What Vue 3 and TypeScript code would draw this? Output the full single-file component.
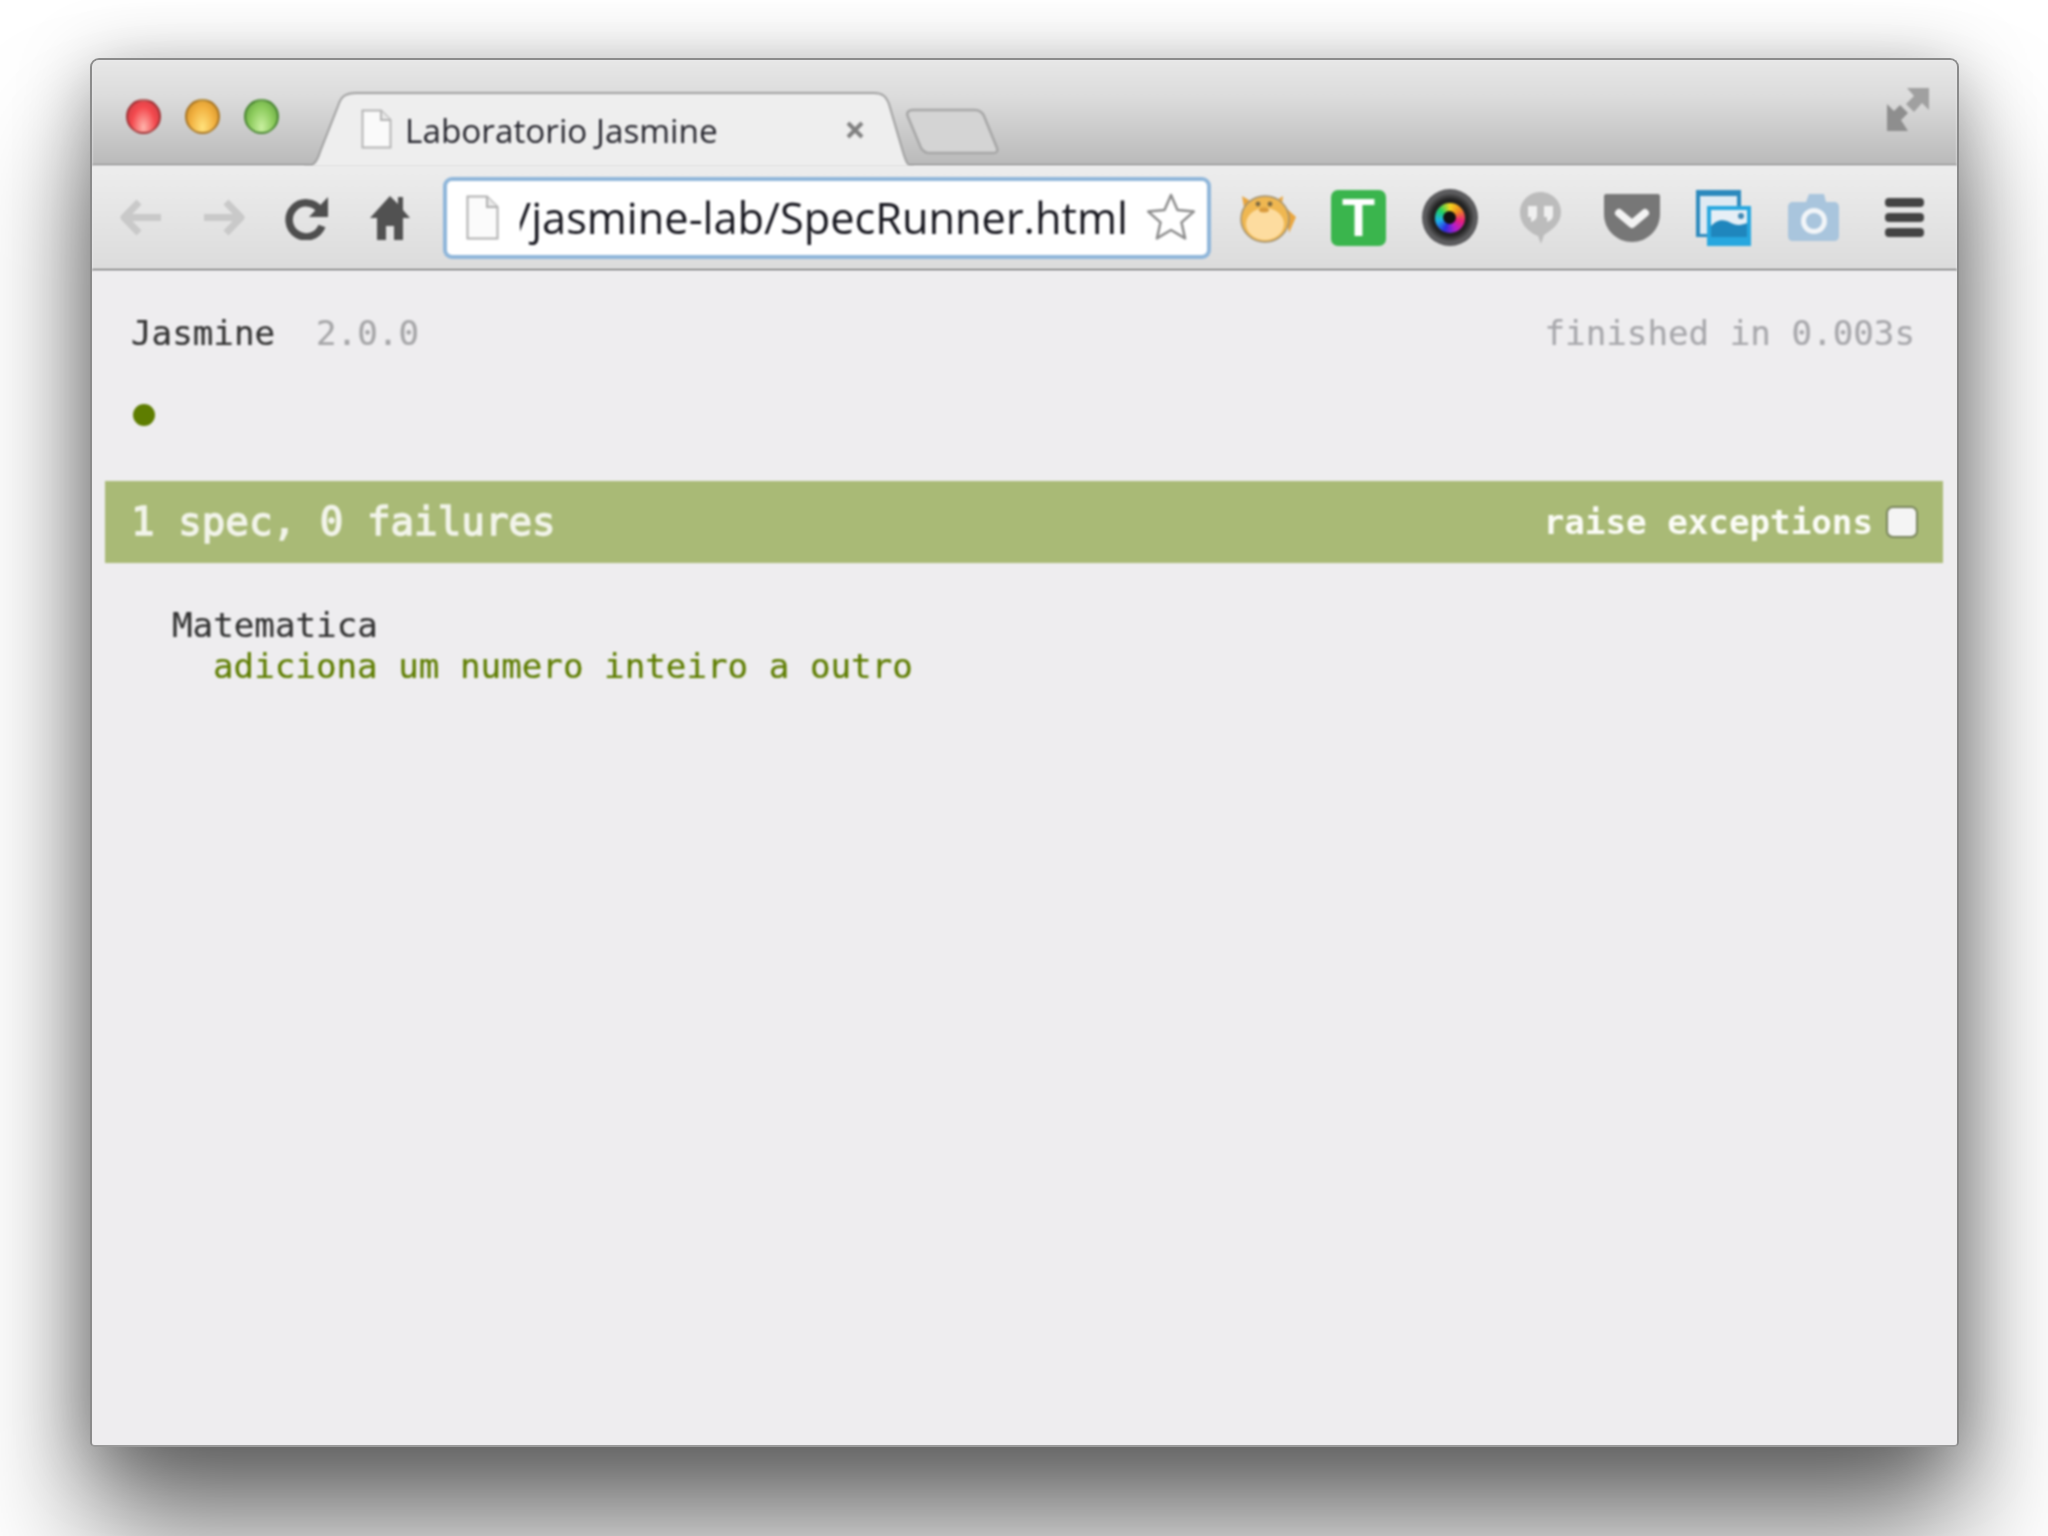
<script setup lang="ts">
const title: string = 'Laboratorio Jasmine'
const url: string = '/jasmine-lab/SpecRunner.html'
</script>

<template>
  <div class="page">
    <div class="window">
      <div class="titlebar">
        <div class="lights">
          <span class="light red"></span>
          <span class="light amber"></span>
          <span class="light green"></span>
        </div>
        <div class="tab">
          <svg class="tab-shape" width="610" height="76" viewBox="0 0 610 76">
            <path d="M0 75 C9 75 13 70 16 60 L34 14 C37 4 42 1 52 1 H570 C578 1 582 4 585 12 L599 60 C602 70 604 75 610 75 Z" fill="#eeeeee" stroke="#9f9f9f" stroke-width="2" />
            <path d="M-2 76 H612" stroke="#eeeeee" stroke-width="3" />
          </svg>
          <svg class="doc" width="31" height="40" viewBox="0 0 31 40">
            <path d="M1.5 1.5 H20 L29.5 11 V38.5 H1.5 Z" fill="#fafafa" stroke="#b4b4b4" stroke-width="2" />
            <path d="M20 1.5 V11 H29.5" fill="#e8e8e8" stroke="#b4b4b4" stroke-width="2" />
          </svg>
          <span class="tab-title">{{ title }}</span>
          <svg class="close" width="20" height="20" viewBox="0 0 20 20">
            <path d="M3 3 L17 17 M17 3 L3 17" stroke="#808080" stroke-width="4" />
          </svg>
        </div>
        <svg class="newtab" width="94" height="47" viewBox="0 0 94 47">
          <path d="M8 2 H70 C75 2 77 4 79 8 L92 40 C93 43 92 45 88 45 H24 C20 45 18 43 16 40 L3 9 C1 5 3 2 8 2 Z" fill="#d4d4d4" stroke="#a6a6a6" stroke-width="2.5" />
        </svg>
        <svg class="expand" width="42" height="43" viewBox="0 0 42 43">
          <path d="M20 0 H42 V22 L35 15 L27 24 L19 16 L27 8 Z" fill="#a0a0a0" />
          <path d="M0 16 L7 23 L13 17 L21 25 L14 32 L21 43 H0 Z" fill="#8e8e8e" />
        </svg>
      </div>

      <div class="toolbar">
        <div class="slot">
          <svg width="44" height="37" viewBox="0 0 44 37">
            <path d="M42 18.5 H6 M20 3 L5 18.5 L20 34" fill="none" stroke="#c9c9c9" stroke-width="7" stroke-linejoin="round" />
          </svg>
        </div>
        <div class="slot">
          <svg width="44" height="37" viewBox="0 0 44 37">
            <path d="M2 18.5 H38 M24 3 L39 18.5 L24 34" fill="none" stroke="#c9c9c9" stroke-width="7" stroke-linejoin="round" />
          </svg>
        </div>
        <div class="slot">
          <svg width="44" height="45" viewBox="0 0 44 45">
            <path d="M35 15 A17 17 0 1 0 37 31" fill="none" stroke="#4e4e4e" stroke-width="7.5" />
            <path d="M43 2 V22 H24 Z" fill="#4e4e4e" />
          </svg>
        </div>
        <div class="slot">
          <svg width="40" height="45" viewBox="0 0 40 45">
            <path d="M20 1 L0 23 H7 V45 H16 V31 H24 V45 H33 V23 H40 L33 15 V2 H28 V9 L25 6 Z" fill="#515151" />
          </svg>
        </div>

        <div class="omnibox">
          <svg class="doc" width="33" height="45" viewBox="0 0 33 45">
            <path d="M1.5 1.5 H21 L31.5 12 V43.5 H1.5 Z" fill="#fbfbfb" stroke="#b0b0b0" stroke-width="2" />
            <path d="M21 1.5 V12 H31.5" fill="#e8e8e8" stroke="#b0b0b0" stroke-width="2" />
          </svg>
          <div class="url-clip"><span class="url-text">{{ url }}</span></div>
          <svg class="star" width="50" height="50" viewBox="0 0 50 50">
            <path d="M25 2 L31.5 17.1 L47.8 18.6 L35.5 29.4 L39.1 45.4 L25 37 L10.9 45.4 L14.5 29.4 L2.2 18.6 L18.5 17.1 Z" fill="#ffffff" stroke="#8c8c8c" stroke-width="2.5" stroke-linejoin="round" />
          </svg>
        </div>

        <div class="extensions">
          <div class="slot wide">
            <svg width="58" height="50" viewBox="0 0 58 50">
              <path d="M3 3 L15 10 L6 20 Z M44 3 L33 10 L42 20 Z M46 14 L57 24 L50 40 Z" fill="#e9a63f" />
              <ellipse cx="26" cy="26" rx="24" ry="23" fill="#efb751" stroke="#a09070" stroke-width="1.5" />
              <ellipse cx="26" cy="31" rx="19" ry="16" fill="#fddc9f" />
              <circle cx="19" cy="11" r="2.4" fill="#7d6a43" />
              <circle cx="31" cy="11" r="2.4" fill="#7d6a43" />
              <ellipse cx="25" cy="17" rx="5" ry="2.5" fill="#d99a3c" />
            </svg>
          </div>
          <div class="slot wide">
            <svg width="55" height="56" viewBox="0 0 55 56">
              <rect width="55" height="56" rx="7" fill="#3ab54d" />
              <text x="27.5" y="46" text-anchor="middle" class="t-mark">T</text>
            </svg>
          </div>
          <div class="slot wide">
            <div class="lens"><div class="lens-color"><div class="lens-core"></div></div></div>
          </div>
          <div class="slot wide">
            <svg width="41" height="52" viewBox="0 0 41 52">
              <path d="M20.5 0 C32 0 41 9 41 20 C41 31 33 37 24 43 L21 52 L18 44 C8 40 0 32 0 20 C0 9 9 0 20.5 0 Z" fill="#bcbcbc" />
              <path d="M8 14 H17 V23 C17 27 14 29 11 30 V25 H8 Z M24 14 H33 V23 C33 27 30 29 27 30 V25 H24 Z" fill="#f0f0f0" />
            </svg>
          </div>
          <div class="slot wide">
            <svg width="56" height="48" viewBox="0 0 56 48">
              <path d="M0 2 C0 1 1 0 2 0 H54 C55 0 56 1 56 2 V20 C56 36 43 48 28 48 C13 48 0 36 0 20 Z" fill="#777777" />
              <path d="M15 19 L28 30 L41 19" fill="none" stroke="#f3f3f3" stroke-width="8" stroke-linecap="round" stroke-linejoin="round" />
            </svg>
          </div>
          <div class="slot wide">
            <svg width="56" height="56" viewBox="0 0 56 56">
              <rect x="1" y="0" width="45" height="47" fill="#2b89bd" />
              <rect x="5" y="6" width="37" height="38" fill="#dfeaf3" />
              <rect x="12" y="16" width="44" height="40" fill="#27a7df" />
              <rect x="16" y="20" width="36" height="27" fill="#e6eff6" />
              <path d="M16 47 V36 C24 28 30 30 36 33 C42 36 47 35 52 33 V47 Z" fill="#1f86bd" />
              <circle cx="46" cy="26" r="3" fill="#3f88b3" />
            </svg>
          </div>
          <div class="slot wide">
            <svg width="51" height="47" viewBox="0 0 51 47">
              <path d="M5 8 H18 L21 0 H36 L38 8 H46 C49 8 51 10 51 13 V42 C51 45 49 47 46 47 H5 C2 47 0 45 0 42 V13 C0 10 2 8 5 8 Z" fill="#a9c5dd" />
              <circle cx="26" cy="27" r="10.5" fill="#a9c5dd" stroke="#f2f5f8" stroke-width="5" />
            </svg>
          </div>
          <div class="slot wide">
            <div class="menu"><span></span><span></span><span></span></div>
          </div>
        </div>
      </div>

      <div class="content">
        <div class="banner">
          <div><span class="brand">Jasmine</span><span class="version">2.0.0</span></div>
          <span class="duration">finished in 0.003s</span>
        </div>
        <div class="dot"></div>
        <div class="bar">
          <span class="bar-title">1 spec, 0 failures</span>
          <label class="raise">
            <span>raise exceptions</span>
            <span class="check"></span>
          </label>
        </div>
        <div class="specs">
          <div class="suite">Matematica</div>
          <div class="spec">adiciona um numero inteiro a outro</div>
        </div>
      </div>
    </div>
  </div>
</template>

<style scoped>
.page {
  width: 2048px;
  height: 1536px;
  box-sizing: border-box;
  padding: 58px 90px 0;
  overflow: hidden;
  background: #ffffff;
}
.window {
  width: 1869px;
  height: 1389px;
  box-sizing: border-box;
  border: 2px solid #8b8b8b;
  border-bottom-color: #9a9a9a;
  border-radius: 9px 9px 5px 5px;
  box-shadow: 0 90px 120px rgba(0, 0, 0, 0.5), 0 12px 70px rgba(0, 0, 0, 0.34);
  display: flex;
  flex-direction: column;
  background: #eeedef;
  overflow: hidden;
}
.titlebar {
  height: 106px;
  box-sizing: border-box;
  display: flex;
  align-items: flex-start;
  padding-left: 34px;
  padding-right: 28px;
  background: linear-gradient(#e7e7e7, #dcdcdc 35%, #bababa);
  border-bottom: 2px solid #9c9c9c;
  filter: blur(0.8px);
}
.lights {
  display: flex;
  gap: 24px;
  padding-top: 39px;
}
.light {
  width: 35px;
  height: 35px;
  border-radius: 50%;
  box-sizing: border-box;
  border: 2px solid rgba(80, 30, 30, 0.45);
}
.red {
  background: radial-gradient(ellipse at 50% 85%, #ffb4ac 0, #f4494e 55%, #c33b42 100%);
}
.amber {
  border-color: rgba(120, 80, 20, 0.55);
  background: radial-gradient(ellipse at 50% 85%, #ffe27c 0, #f2b140 55%, #c98a25 100%);
}
.green {
  border-color: rgba(40, 100, 30, 0.6);
  background: radial-gradient(ellipse at 50% 85%, #c9f0a0 0, #8ccb5c 55%, #5d9a3c 100%);
}
.tab {
  position: relative;
  width: 610px;
  height: 76px;
  margin-top: 32px;
  margin-left: 25px;
  box-sizing: border-box;
  padding: 17px 0 0 57px;
  display: flex;
  align-items: flex-start;
  flex-shrink: 0;
}
.tab-shape {
  position: absolute;
  left: 0;
  top: 0;
}
.tab .doc {
  position: relative;
  flex-shrink: 0;
}
.tab-title {
  position: relative;
  margin-left: 13px;
  margin-top: 1px;
  width: 445px;
  font: 33.3px/40px "Open Sans", sans-serif;
  color: #26262e;
  white-space: nowrap;
}
.close {
  position: relative;
  margin-top: 11px;
  flex-shrink: 0;
  margin-left: -5px;
}
.newtab {
  margin-top: 48px;
  margin-left: -9px;
  flex-shrink: 0;
}
.expand {
  margin-left: auto;
  margin-top: 28px;
}
.toolbar {
  height: 105px;
  box-sizing: border-box;
  display: flex;
  align-items: center;
  padding-left: 7px;
  background: linear-gradient(#ededed, #dcdcdc);
  border-bottom: 2px solid #7c7c7c;
  filter: blur(0.8px);
}
.slot {
  width: 83px;
  display: flex;
  justify-content: center;
  align-items: center;
  flex-shrink: 0;
}
.slot.wide {
  width: 91px;
}
.omnibox {
  width: 768px;
  height: 82px;
  margin-left: 12px;
  box-sizing: border-box;
  border: 4px solid #8fb6da;
  border-radius: 9px;
  background: #ffffff;
  display: flex;
  align-items: center;
  padding-left: 19px;
  flex-shrink: 0;
}
.url-clip {
  width: 608px;
  margin-left: 21px;
  display: flex;
  justify-content: flex-end;
  overflow: hidden;
}
.url-text {
  font: 43.3px/56px "Open Sans", sans-serif;
  color: #16161e;
  white-space: nowrap;
  flex-shrink: 0;
}
.star {
  margin-left: 18px;
  flex-shrink: 0;
}
.extensions {
  display: flex;
  margin-left: 11px;
}
.t-mark {
  font: bold 54px "Liberation Sans", sans-serif;
  fill: #ffffff;
}
.lens {
  width: 56px;
  height: 57px;
  border-radius: 50%;
  background: radial-gradient(circle, #222 45%, #5e5e60 62%, #46464a 100%);
  display: flex;
  align-items: center;
  justify-content: center;
}
.lens-color {
  width: 30px;
  height: 30px;
  border-radius: 50%;
  background: conic-gradient(#f6d51f, #f08a1f, #e8207a, #b01fd0, #2b2ee0, #1fb0e8, #1fd060, #f6d51f);
  display: flex;
  align-items: center;
  justify-content: center;
}
.lens-core {
  width: 13px;
  height: 13px;
  border-radius: 50%;
  background: #111;
}
.menu {
  width: 39px;
  display: flex;
  flex-direction: column;
  gap: 6px;
}
.menu span {
  height: 9px;
  border-radius: 4px;
  background: #444444;
}
.content {
  flex: 1;
  padding: 42px 14px 0 13px;
  background: #eeedef;
  font-family: "DejaVu Sans Mono", monospace;
  font-size: 34.2px;
  line-height: 40px;
  -webkit-text-stroke: 0.2px currentColor;
  filter: blur(0.8px);
}
.banner {
  display: flex;
  justify-content: space-between;
  padding: 0 28px 0 26px;
}
.brand {
  color: #333333;
}
.version {
  color: #a6a6a8;
  margin-left: 41px;
}
.duration {
  color: #a8a8ac;
}
.dot {
  width: 22px;
  height: 22px;
  margin: 51px 0 0 28px;
  border-radius: 50%;
  background: #5e7d00;
}
.bar {
  height: 82px;
  margin-top: 55px;
  padding: 0 25px 0 26px;
  box-sizing: border-box;
  display: flex;
  align-items: center;
  justify-content: space-between;
  background: #a9ba76;
  color: #f2f4ea;
}
.bar-title {
  font-size: 39.2px;
  -webkit-text-stroke: 1.4px currentColor;
}
.raise {
  display: flex;
  align-items: center;
  font-weight: bold;
  color: #fbfcf6;
  -webkit-text-stroke: 0;
}
.check {
  width: 32px;
  height: 32px;
  margin-left: 13px;
  box-sizing: border-box;
  border: 2px solid #77835a;
  border-radius: 7px;
  background: #f4f4f4;
}
.specs {
  margin-top: 42px;
  padding-left: 67px;
  line-height: 41px;
}
.suite {
  color: #333333;
}
.spec {
  padding-left: 41px;
  color: #5e7d00;
}
</style>
